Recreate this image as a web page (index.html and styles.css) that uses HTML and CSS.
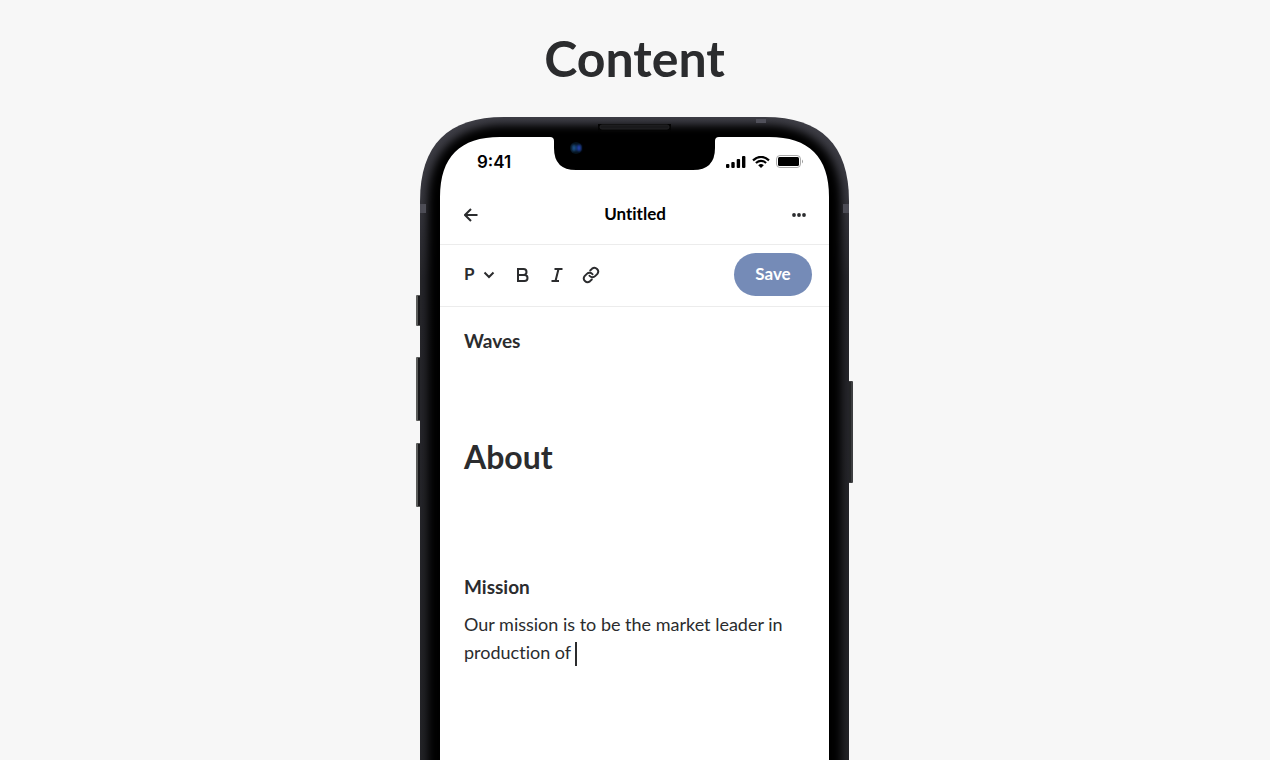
FILE: index.html
```html
<!DOCTYPE html>
<html lang="en">
<head>
<meta charset="utf-8">
<title>Content</title>
<meta name="viewport" content="width=device-width, initial-scale=1">
<link rel="stylesheet" href="styles.css">
</head>
<body>
<main class="page">
  <h1 class="page-title">Content</h1>
  <section class="phone" aria-label="Document editor">
    <svg class="phone-frame" viewBox="0 0 437 1000" aria-hidden="true">
      <defs>
        <linearGradient id="metal" x1="0" y1="0" x2="0" y2="1">
          <stop offset="0" stop-color="#3e3e46"/>
          <stop offset=".08" stop-color="#37373e"/>
          <stop offset=".16" stop-color="#26262b"/>
          <stop offset="1" stop-color="#202124"/>
        </linearGradient>
        <filter id="soft" x="-10%" y="-10%" width="120%" height="120%"><feGaussianBlur stdDeviation="4"/></filter>
        <filter id="glow" x="-100%" y="-100%" width="300%" height="300%"><feGaussianBlur stdDeviation="1"/></filter>
        <clipPath id="body"><path d="M4 1000V84C4 28 32 0 88 0H349C405 0 433 28 433 84V1000Z"/></clipPath>
      </defs>
      <g fill="#5a5b5a">
        <rect x="0" y="178" width="6" height="31" rx="1"/>
        <rect x="0" y="240" width="6" height="64" rx="1"/>
        <rect x="0" y="326" width="6" height="64" rx="1"/>
      </g>
      <path d="M3 179V208M3 241V303M3 327V389" stroke="#19191b" stroke-width="2"/>
      <rect x="431" y="264" width="6" height="102" rx="1" fill="#3d3e40"/>
      <path d="M434 265V365" stroke="#242527" stroke-width="2"/>
      <g clip-path="url(#body)">
        <rect x="4" width="429" height="1000" fill="url(#metal)"/>
        <path d="M12 1020V84C12 36 40 8 88 8H349C397 8 425 36 425 84V1020Z" fill="#000" filter="url(#soft)"/>
        <rect x="4" y="87" width="6" height="9" fill="#4c4c55"/>
        <rect x="427" y="87" width="6" height="9" fill="#4c4c55"/>
        <rect x="340" y="2" width="10" height="4" fill="#50505a"/>
      </g>
      <path d="M182 7H255V12Q255 15 252 15H185Q182 15 182 12Z" fill="#050505"/>
      <rect x="184" y="8" width="69" height="4" rx="2" fill="#19191b" stroke="#222224"/>
      <path d="M24 1000V80C24 40 44 20 84 20H134Q138 20 138 24V31Q138 53 160 53H277Q299 53 299 31V24Q299 20 303 20H353C393 20 413 40 413 80V1000Z" fill="#fff"/>
      <circle cx="160" cy="31" r="6" fill="#05121c"/>
      <g filter="url(#glow)"><rect x="156" y="28" width="4" height="6" rx="1" fill="#1c4f86"/><rect x="161" y="28" width="4" height="6" rx="1" fill="#2340a8"/></g>
    </svg>

    <div class="screen">
      <div class="status-bar">
        <span class="clock">9:41</span>
        <span class="status-icons">
          <svg width="20" height="12" viewBox="0 0 20 12" role="img" aria-label="Signal">
            <rect x="0" y="8" width="3.400" height="4" rx="1"/><rect x="5.300" y="6" width="3.400" height="6" rx="1"/><rect x="10.700" y="3" width="3.400" height="9" rx="1"/><rect x="16" y="0" width="3.400" height="12" rx="1"/>
          </svg>
          <svg width="18" height="12" viewBox="0 0 18 12" role="img" aria-label="Wi-Fi">
            <path d="M1 4.300Q9-2.500 17 4.300M3.900 7Q9 2.700 14.100 7" fill="none" stroke="#000" stroke-width="2.200"/>
            <path d="M6.200 9.200Q9 7 11.800 9.200L9 12Z"/>
          </svg>
          <svg width="28" height="14" viewBox="0 0 28 14" role="img" aria-label="Battery">
            <rect x=".5" y=".5" width="24" height="12" rx="3.500" fill="none" stroke="#aaa"/>
            <rect x="2" y="2" width="21" height="9" rx="1.500"/><path d="M26 4.500Q28 6.500 26 8.500Z" fill="#999"/>
          </svg>
        </span>
      </div>

      <header class="nav-bar">
        <button class="icon-button" type="button" aria-label="Back">
          <svg width="14" height="14" viewBox="0 0 14 14"><path d="M13.500 7H1.200M7 1L1 7L7 13" class="line"/></svg>
        </button>
        <h2 class="nav-title">Untitled</h2>
        <button class="icon-button" type="button" aria-label="More">
          <svg width="14" height="14" viewBox="0 0 14 14"><circle cx="2" cy="7" r="1.900"/><circle cx="7" cy="7" r="1.900"/><circle cx="12" cy="7" r="1.900"/></svg>
        </button>
      </header>

      <div class="toolbar" role="toolbar" aria-label="Formatting">
        <div class="style-picker">
          <select class="style-select" aria-label="Text style"><option>P</option></select>
          <svg class="chevron" width="12" height="8" viewBox="0 0 12 8" aria-hidden="true"><path d="M1.500 1.500L6 6L10.500 1.500" class="line"/></svg>
        </div>
        <button class="icon-button" type="button" aria-label="Bold">
          <svg width="18" height="18" viewBox="0 0 18 18"><path d="M4 3H9.500A3 3 0 0 1 9.500 9H4ZM4 9H10.500A3 3 0 0 1 10.500 15H4Z" class="line"/></svg>
        </button>
        <button class="icon-button" type="button" aria-label="Italic">
          <svg width="18" height="18" viewBox="0 0 18 18"><path d="M6.500 3H14.500M3.500 15H11M10.500 3L7.500 15" class="line"/></svg>
        </button>
        <button class="icon-button" type="button" aria-label="Link">
          <svg width="18" height="18" viewBox="0 0 24 24"><path d="M10 13A5 5 0 0 0 17.500 13.500L20.500 10.500A5 5 0 0 0 13.500 3.500L11 6M14 11A5 5 0 0 0 6.500 10.500L3.500 13.500A5 5 0 0 0 10.500 20.500L13 18" class="line link-line"/></svg>
        </button>
        <button class="save-button" type="button">Save</button>
      </div>

      <article class="document">
        <h4 class="doc-label">Waves</h4>
        <h3 class="doc-heading">About</h3>
        <h4 class="doc-label">Mission</h4>
        <p class="doc-text">Our mission is to be the market leader in production of <span class="caret"></span></p>
      </article>
    </div>
  </section>
</main>
</body>
</html>
```
FILE: styles.css
```css
* { box-sizing: border-box; }

body {
  margin: 0;
  background: #f7f7f7;
  color: #2b2c2e;
  font-family: Lato, "Open Sans", sans-serif;
  font-variant-ligatures: none;
}

h1, h2, h3, h4, p { margin: 0; }

.page {
  display: flex;
  flex-direction: column;
  align-items: center;
  height: 100vh;
  padding: 26px 1px 0 0;
  overflow: hidden;
}

.page-title {
  font-size: 50px;
  line-height: 64px;
  font-weight: 700;
  margin-bottom: 27px;
}

.phone {
  position: relative;
  flex: 1;
  width: 100%;
  max-width: 437px;
  overflow: hidden;
  padding: 20px 24px 0;
}

.phone-frame {
  position: absolute;
  top: 0;
  left: 0;
  width: 100%;
}

.screen { position: relative; }

.status-bar {
  display: flex;
  justify-content: space-between;
  align-items: center;
  height: 48px;
  padding: 2px 25px 0 37px;
}

.clock {
  font: 600 17px/20px Inter, sans-serif;
  color: #000;
}

.status-icons {
  display: flex;
  align-items: center;
  gap: 6px;
}

.nav-bar {
  display: flex;
  justify-content: space-between;
  align-items: center;
  height: 60px;
  padding: 0 23px 0 24px;
  border-bottom: 1px solid #ececec;
}

.nav-title {
  padding-bottom: 2px;
  font-size: 17px;
  line-height: 24px;
  font-weight: 700;
  color: #000;
}

.icon-button {
  display: flex;
  padding: 0;
  border: 0;
  background: none;
  color: #2b2c2e;
  fill: currentColor;
}

.line {
  fill: none;
  stroke: #2b2c2e;
  stroke-width: 2;
}

.link-line {
  stroke-width: 2.6px;
  stroke-linecap: round;
}

.toolbar {
  display: flex;
  align-items: center;
  gap: 16px;
  padding: 8px 17px 10px 24px;
  border-bottom: 1px solid #ececec;
}

.style-picker {
  position: relative;
  width: 34px;
}

.style-select {
  display: block;
  width: 100%;
  padding: 0 0 2px;
  border: 0;
  background: none;
  appearance: none;
  color: #2b2c2e;
  font: 700 17px/24px Lato, sans-serif;
}

.chevron {
  position: absolute;
  right: 3px;
  top: 9px;
  pointer-events: none;
}

.save-button {
  margin-left: auto;
  width: 78px;
  height: 43px;
  padding: 0 0 2px;
  border: 0;
  border-radius: 22px;
  background: #758bb7;
  color: #fff;
  font: 700 17px/24px Lato, sans-serif;
}

.document { padding: 20px 24px; }

.doc-label {
  font-size: 19px;
  line-height: 28px;
  font-weight: 700;
}

.doc-heading {
  font-size: 32px;
  line-height: 44px;
  font-weight: 700;
  margin: 80px 0 94px;
}

.doc-text {
  margin-top: 9px;
  font-size: 18px;
  line-height: 28px;
}

.caret {
  display: inline-block;
  width: 2px;
  height: 24px;
  margin: -4px 0;
  vertical-align: middle;
  background: #2b2c2e;
}
```
